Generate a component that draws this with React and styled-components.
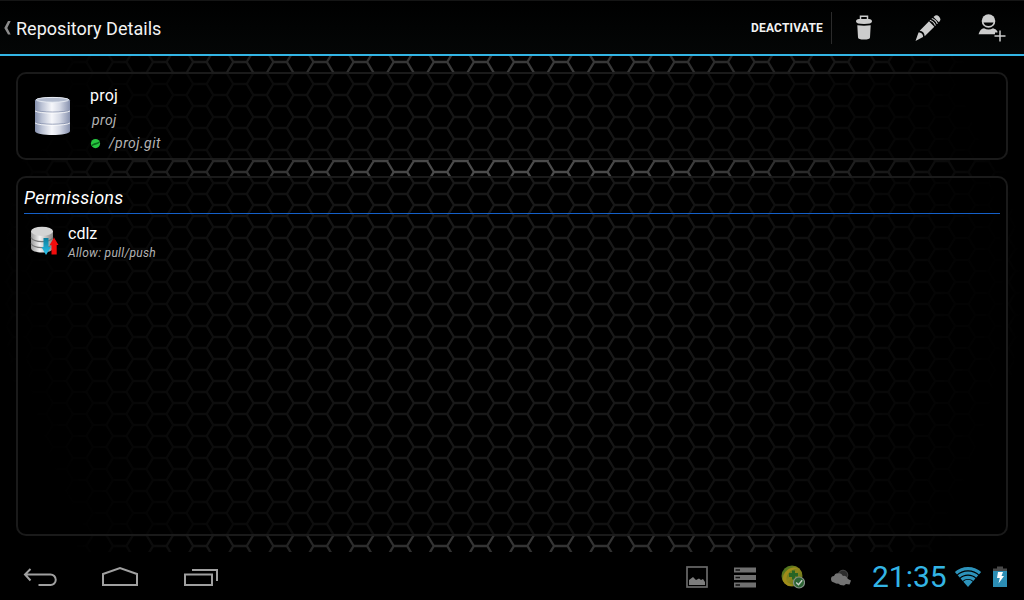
import React from "react";
import styled, { createGlobalStyle } from "styled-components";

const Global = createGlobalStyle`
  * { box-sizing: border-box; }
  body { margin: 0; background: #000; font-family: Roboto, "Noto Sans", sans-serif; overflow: hidden; }
  svg { display: block; }
`;

const Screen = styled.div`
  width: 1024px;
  height: 600px;
  display: flex;
  flex-direction: column;
  background: #000;
  color: #fff;
`;

const ActionBar = styled.header`
  height: 56px;
  flex: none;
  display: flex;
  align-items: center;
  padding-left: 3px;
  background: linear-gradient(#000, #040606);
  border-top: 1px solid #151515;
  border-bottom: 2px solid #33b5e5;
`;

const Title = styled.h1`
  flex: 1;
  margin: 0 0 0 5px;
  padding-top: 2px;
  font-size: 18px;
  line-height: 24px;
  font-weight: 400;
  color: #f3f3f3;
  letter-spacing: 0.02px;
`;

const TextAction = styled.button`
  border: 0;
  border-right: 1px solid #2b2b2b;
  background: none;
  color: #f3f3f3;
  font: 700 12px/32px Roboto, sans-serif;
  height: 32px;
  padding: 0 8px 0 0;
  letter-spacing: 0.2px;
`;

const IconAction = styled.button`
  width: 64px;
  height: 48px;
  border: 0;
  padding: 0;
  background: none;
  display: grid;
  place-items: center;
`;

const Content = styled.main`
  position: relative;
  flex: 1;
  display: flex;
  flex-direction: column;
  gap: 16px;
  padding: 16px;
  overflow: hidden;
`;

const Backdrop = styled.svg`
  position: absolute;
  inset: 0;
`;

const Card = styled.section`
  position: relative;
  flex: ${(p) => (p.$grow ? "1" : "none")};
  height: ${(p) => p.$height || "auto"};
  display: flex;
  flex-direction: ${(p) => (p.$grow ? "column" : "row")};
  align-items: ${(p) => (p.$grow ? "stretch" : "flex-start")};
  padding: ${(p) => p.$pad};
  border: 2px solid rgba(32, 32, 32, 0.8);
  border-radius: 10px;
  background: rgba(0, 0, 0, 0.67);
`;

const IconSlot = styled.div`
  padding-top: ${(p) => p.$top || "0"};
`;

const Lines = styled.div`
  display: flex;
  flex-direction: column;
  margin-left: ${(p) => p.$gap};
`;

const Name = styled.div`
  font-size: 16px;
  line-height: ${(p) => p.$line};
  color: #fff;
  letter-spacing: ${(p) => p.$spacing || "0"};
`;

const Detail = styled.div`
  display: flex;
  align-items: center;
  gap: 8px;
  font-style: italic;
  color: #b4b4b4;
  font-size: ${(p) => p.$size};
  line-height: ${(p) => p.$line};
  padding-left: ${(p) => p.$indent || "0"};
  letter-spacing: ${(p) => p.$spacing || "0"};
`;

const SectionTitle = styled.h2`
  margin: 0;
  height: 32px;
  font-size: 18px;
  font-style: italic;
  font-weight: 400;
  line-height: 27px;
  letter-spacing: 0.28px;
  padding-top: 2px;
  border-bottom: 1px solid #1560c8;
`;

const MemberRow = styled.div`
  display: flex;
  padding: 9px 0 0 6px;
`;

const NavBar = styled.footer`
  height: 48px;
  flex: none;
  display: flex;
  align-items: center;
  justify-content: space-between;
  background: #000;
`;

const NavKeys = styled.nav`
  display: flex;
  align-items: center;
`;

const Tray = styled.div`
  display: flex;
  align-items: center;
  padding: 2px 6px 0 0;
`;

const TraySlot = styled.div`
  width: ${(p) => p.$width || "48px"};
  display: grid;
  place-items: center;
`;

const Clock = styled.time`
  width: 89px;
  padding-left: 7px;
  font-size: 30px;
  line-height: 48px;
  color: #33b5e5;
  white-space: nowrap;
`;

const HEX_WIDTH = 40.1;
const HEX_HEIGHT = 22;

const hexPath = (() => {
  const parts = [];
  for (let col = -1; col < 27; col++) {
    const x = 480.6 + (col - 12) * HEX_WIDTH;
    for (let row = -1; row < 24; row++) {
      const y = 62 + row * HEX_HEIGHT;
      parts.push(
        `M${x - 13.4} ${y + 11}L${x - 6.7} ${y}H${x + 6.7}L${x + 13.4} ${y + 11}L${x + 6.7} ${y + 22}` +
          `M${x + 13.4} ${y + 11}H${x + 26.7}M${x - 13.4} ${y + 11}L${x - 6.7} ${y + 22}`
      );
    }
  }
  return parts.join("");
})();

const HexBackdrop = () => (
  <Backdrop width="1024" height="496" viewBox="0 56 1024 496">
    <defs>
      <radialGradient id="fade" gradientUnits="userSpaceOnUse" cx="0" cy="0" r="1" gradientTransform="translate(512 290) scale(510 500)">
        <stop offset="0" stopColor="#fff" />
        <stop offset="0.3" stopColor="#dadada" />
        <stop offset="0.6" stopColor="#858585" />
        <stop offset="0.85" stopColor="#2a2a2a" />
        <stop offset="1" stopColor="#000" />
      </radialGradient>
      <mask id="vignette" maskUnits="userSpaceOnUse" x="0" y="56" width="1024" height="496">
        <rect y="56" width="1024" height="496" fill="url(#fade)" />
      </mask>
    </defs>
    <g mask="url(#vignette)">
      <path d={hexPath} fill="none" stroke="#565656" strokeWidth="2.3" />
    </g>
  </Backdrop>
);

const DatabaseIcon = () => (
  <svg width="38" height="40" viewBox="0 0 38 40">
    <defs>
      <linearGradient id="steel">
        <stop offset="0" stopColor="#8590ad" />
        <stop offset="0.2" stopColor="#bcc3d5" />
        <stop offset="0.48" stopColor="#f6f7fb" />
        <stop offset="0.7" stopColor="#d7dbe7" />
        <stop offset="1" stopColor="#8791ae" />
      </linearGradient>
    </defs>
    <path d="M1 4.500C1 -.3 36 -.3 36 4.500V35C36 40.300 1 40.300 1 35Z" fill="url(#steel)" />
    <ellipse cx="18.500" cy="3.800" rx="16.300" ry="2.400" fill="#b3bccf" stroke="#eef1f7" strokeWidth=".8" />
    <path d="M1 14C5 16.800 32 16.800 36 14M1 26C5 29 32 29 36 26" fill="none" stroke="#8d97b2" strokeWidth="1" />
    <path d="M1 15C5 17.800 32 17.800 36 15M1 27C5 30 32 30 36 27" fill="none" stroke="#fff" strokeWidth=".8" />
  </svg>
);

const SyncDatabaseIcon = () => (
  <svg width="30" height="32" viewBox="0 0 30 32">
    <defs>
      <linearGradient id="silver">
        <stop offset="0" stopColor="#999" />
        <stop offset="0.4" stopColor="#f2f2f2" />
        <stop offset="1" stopColor="#888" />
      </linearGradient>
      <linearGradient id="down" x2="0" y2="1">
        <stop offset="0" stopColor="#0a7d9c" />
        <stop offset="1" stopColor="#2cc6f0" />
      </linearGradient>
    </defs>
    <path d="M1 7V24C1 30 23 30 23 24V7Z" fill="url(#silver)" />
    <ellipse cx="12" cy="7.300" rx="11" ry="4.600" fill="#d4d4d4" />
    <path d="M1 13.500C4 19 20 19 23 13.500M1 19.500C4 25 20 25 23 19.500" fill="none" stroke="#777" strokeWidth="1.200" />
    <path d="M13.500 14H18.500V23H21L16 31L11.500 23H13.500Z" fill="url(#down)" />
    <path d="M24 13.500L28.500 21H26.700V30.500H21.500V21H19.700Z" fill="#f20c0c" />
  </svg>
);

const StatusDot = () => (
  <svg width="11" height="10" viewBox="0 0 11 10">
    <circle cx="5.500" cy="4.600" r="4.600" fill="#27c840" />
    <path d="M1.500 6C4 3.500 6 4.500 9.500 2.500L9.700 3.800C7 6 4 5.500 2.100 7.300Z" fill="#0b6b1d" />
  </svg>
);

const BackChevron = () => (
  <svg width="8" height="16" viewBox="0 0 8 16">
    <path d="M5 1H7.700L4.300 8L7.700 14.500H5L1.300 8Z" fill="#8c8c8c" />
  </svg>
);

const TrashIcon = () => (
  <svg width="18" height="26" viewBox="0 0 18 26">
    <path d="M5.500 4V1.200H12.500V4" fill="none" stroke="#ccc" strokeWidth="1.500" />
    <path d="M1 6.500Q1 4 4 4H14Q17 4 17 6.500Q17 9 9 9Q1 9 1 6.500ZM2.300 10.300Q9 11.200 15.700 10.300L15 22.500Q14.800 24.500 9 24.500Q3.200 24.500 3 22.500Z" fill="#ccc" />
  </svg>
);

const PencilIcon = () => (
  <svg width="26" height="28" viewBox="0 0 26 28">
    <g fill="#ccc">
      <path d="M.5 27L3.500 18.500C6 18 8.500 20.500 8 23Z" />
      <path d="M4.700 16.800L14 7.200L19.300 12.800L9.700 22.300C9.500 19 7.500 17 4.700 16.800Z" />
      <path d="M19 2.500Q21.500 0 24 2.600Q26.500 5.200 24.500 7.500L23.800 8.200L18.500 3Z" />
    </g>
    <path d="M14.900 6.200Q19 7.500 20.400 11.600M16.800 4.500Q21 6 22.300 9.900" fill="none" stroke="#ccc" strokeWidth="1.200" />
  </svg>
);

const AddUserIcon = () => (
  <svg width="28" height="30" viewBox="0 0 28 30">
    <g fill="#ccc">
      <circle cx="10.500" cy="8" r="6.800" />
      <path d="M.5 21.300Q2 15.800 6 15.200Q10.500 18 15 15.200Q18.500 16 19.500 18.500V19.500H17V21.300Z" />
    </g>
    <path d="M5.500 9.500H15.500Q14.500 13 10.500 13Q6.500 13 5.500 9.500Z" fill="#030404" />
    <path d="M22 17.500V28.500M16.500 23H27.500" stroke="#ccc" strokeWidth="1.500" />
  </svg>
);

const BackKey = () => (
  <svg width="80" height="48" viewBox="0 0 80 48" fill="none" stroke="#a0a0a0" strokeWidth="2">
    <path d="M25 22.500H50.500A5 5 0 0 1 50.500 33H38.500M30.500 17L25 22.500L30.500 28.500" />
  </svg>
);

const HomeKey = () => (
  <svg width="80" height="48" viewBox="0 0 80 48" fill="none" stroke="#a0a0a0" strokeWidth="2">
    <path d="M23 33V22L40 16L57 22V33Z" />
  </svg>
);

const RecentKey = () => (
  <svg width="80" height="48" viewBox="0 0 80 48" fill="none" stroke="#a0a0a0" strokeWidth="2">
    <path d="M25 22.500H52V33H25ZM32 18H57V29" />
  </svg>
);

const PictureIcon = () => (
  <svg width="22" height="22" viewBox="0 0 22 22">
    <rect x="1" y="1" width="20" height="20" fill="none" stroke="#696969" strokeWidth="1.700" />
    <path d="M3 19V14L5 12.500L7 11L10 14L13 12.500L15 14L17 13L19 16V19Z" fill="#7c7c7c" />
  </svg>
);

const ServerIcon = () => (
  <svg width="22" height="21" viewBox="0 0 22 21">
    <path d="M0 .5H22V5.500H0ZM0 8H22V13H0ZM0 15.500H22V20.500H0Z" fill="#707070" />
    <path d="M1.500 3H6M1.500 10.500H6M1.500 18H6" stroke="#111" strokeWidth="1.300" />
  </svg>
);

const SecurityIcon = () => (
  <svg width="24" height="24" viewBox="0 0 24 24">
    <defs>
      <linearGradient id="globe" x2="1" y2="1">
        <stop offset="0" stopColor="#2c6a20" />
        <stop offset="0.5" stopColor="#8f861c" />
        <stop offset="1" stopColor="#4f701c" />
      </linearGradient>
    </defs>
    <circle cx="11" cy="11" r="10.500" fill="url(#globe)" />
    <path d="M2 16Q1 9 7 4.500Q12 1 17 3.500Q10 4 7 9Q4.500 13 6 17Q10 20 13 20Q8 22.500 4.500 19Z" fill="#a08c1a" />
    <path d="M8 8H11V5.500H14V8H17V11.500H14V14.500H11V12H8Z" fill="#286425" />
    <circle cx="18" cy="17.500" r="5.500" fill="#2c6434" stroke="#849087" strokeWidth="1.200" />
    <path d="M15.200 17.500L17.500 19.700L21.200 15.200" fill="none" stroke="#c8d0c8" strokeWidth="1.400" />
  </svg>
);

const WeatherIcon = () => (
  <svg width="22" height="18" viewBox="0 0 22 18">
    <circle cx="13" cy="7" r="4.800" fill="#2c2c2c" stroke="#484848" />
    <path d="M1 11Q1 8 4 8Q5 4.500 8.500 5.500Q11 4.500 13 8Q16 7 18 11L21 12.500L19.500 16.500L16 16L14 17.500Q10 17.500 8 15.500Q6 16 4 14.500Q1 14 1 11Z" fill="#737373" />
  </svg>
);

const WifiIcon = () => (
  <svg width="28" height="22" viewBox="0 0 28 22">
    <clipPath id="fan">
      <path d="M14 21L0 5Q14 -4 28 5Z" />
    </clipPath>
    <g clipPath="url(#fan)" fill="none" stroke="#2d93bb" strokeWidth="3.200">
      <circle cx="14" cy="21" r="18.300" />
      <circle cx="14" cy="21" r="14" />
      <circle cx="14" cy="21" r="9.700" />
      <circle cx="14" cy="21" r="3.600" strokeWidth="7.200" />
    </g>
  </svg>
);

const BatteryIcon = () => (
  <svg width="14" height="22" viewBox="0 0 14 22">
    <path d="M4 .5H10V2.500H14V6H0V2.500H4Z" fill="#484848" />
    <path d="M0 5H14V21H0Z" fill="#2c8eb5" />
    <path d="M5 6H10L8.500 10H11L5.500 17.500L6.800 12H4Z" fill="#fff" />
  </svg>
);

export default function App() {
  return (
    <Screen>
      <Global />
      <ActionBar>
        <BackChevron />
        <Title>Repository Details</Title>
        <TextAction>DEACTIVATE</TextAction>
        <IconAction aria-label="Delete"><TrashIcon /></IconAction>
        <IconAction aria-label="Edit"><PencilIcon /></IconAction>
        <IconAction aria-label="Add user"><AddUserIcon /></IconAction>
      </ActionBar>
      <Content>
        <HexBackdrop />
        <Card $height="88px" $pad="10px 16px 0">
          <IconSlot $top="12px"><DatabaseIcon /></IconSlot>
          <Lines $gap="18px">
            <Name $line="24px" $spacing="0.2px">proj</Name>
            <Detail $size="14px" $line="24px" $indent="2px" $spacing="0.4px">proj</Detail>
            <Detail $size="14px" $line="23px" $spacing="0.47px"><StatusDot />/proj.git</Detail>
          </Lines>
        </Card>
        <Card $grow $pad="4px 6px">
          <SectionTitle>Permissions</SectionTitle>
          <MemberRow>
            <IconSlot $top="1px"><SyncDatabaseIcon /></IconSlot>
            <Lines $gap="8px">
              <Name $line="22px">cdlz</Name>
              <Detail $size="12px" $line="16px" $spacing="0.3px">Allow: pull/push</Detail>
            </Lines>
          </MemberRow>
        </Card>
      </Content>
      <NavBar>
        <NavKeys>
          <BackKey />
          <HomeKey />
          <RecentKey />
        </NavKeys>
        <Tray>
          <TraySlot><PictureIcon /></TraySlot>
          <TraySlot><ServerIcon /></TraySlot>
          <TraySlot><SecurityIcon /></TraySlot>
          <TraySlot><WeatherIcon /></TraySlot>
          <Clock>21:35</Clock>
          <WifiIcon />
          <TraySlot $width="36px"><BatteryIcon /></TraySlot>
        </Tray>
      </NavBar>
    </Screen>
  );
}
